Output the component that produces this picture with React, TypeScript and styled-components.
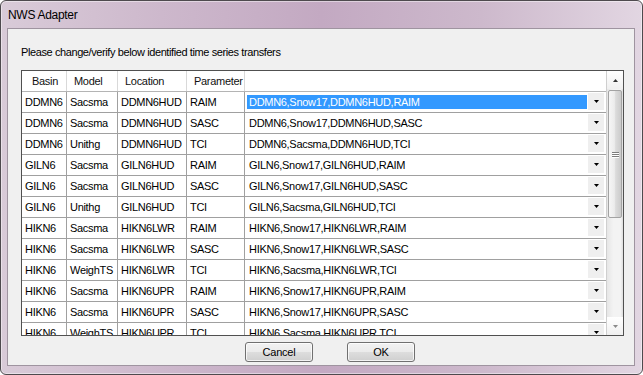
import React from "react";
import styled, { createGlobalStyle } from "styled-components";

const Global = createGlobalStyle`
  html, body { margin: 0; padding: 0; background: #ffffff; }
  body { font-family: "Liberation Sans", Arial, sans-serif; }
  * { box-sizing: border-box; }
`;

const Window = styled.div`
  width: 643px;
  height: 375px;
  border: 1px solid #4e4a4e;
  border-radius: 6px;
  background: linear-gradient(90deg, #d9cbd8 0%, #cdb8cc 25%, #c3a9c2 50%, #cdb9cc 75%, #e2d6e2 100%);
  box-shadow: inset 0 0 0 1px rgba(255, 255, 255, 0.45);
  display: flex;
  flex-direction: column;
  padding: 0 7px 8px 6px;
  overflow: hidden;
`;

const TitleBar = styled.div`
  height: 27px;
  display: flex;
  align-items: center;
  padding-left: 1px;
  font-size: 12px;
  letter-spacing: -0.3px;
  color: #000;
`;

const Content = styled.div`
  flex: 1;
  border: 1px solid #9f94a0;
  background: #f0f0f0;
  display: flex;
  flex-direction: column;
  padding: 16px 10px 0 13px;
`;

const Label = styled.div`
  font-size: 11px;
  line-height: 14px;
  letter-spacing: -0.4px;
  color: #000;
  white-space: nowrap;
`;

const GridBox = styled.div`
  margin-top: 11px;
  height: 266px;
  border: 1px solid #505050;
  background: #ffffff;
  display: flex;
  overflow: hidden;
`;

const Data = styled.div`
  flex: 1;
  display: flex;
  flex-direction: column;
  overflow: hidden;
`;

const cols = "45px 51px 69px 58px 1fr";

const HeaderRow = styled.div`
  display: grid;
  grid-template-columns: ${cols};
  height: 21px;
  flex-shrink: 0;
  border-bottom: 1px solid #b4b4b4;
  background: #ffffff;
`;

const HeaderCell = styled.div<{ $last?: boolean; $pad?: number }>`
  border-right: ${(p) => (p.$last ? "none" : "1px solid #d9d9d9")};
  padding-left: ${(p) => p.$pad ?? 7}px;
  font-size: 11px;
  line-height: 20px;
  letter-spacing: -0.3px;
  color: #111;
  white-space: nowrap;
  overflow: hidden;
`;

const Row = styled.div`
  display: grid;
  grid-template-columns: ${cols};
  height: 21px;
  flex-shrink: 0;
`;

const Cell = styled.div`
  border-right: 1px solid #a0a0a0;
  border-bottom: 1px solid #a0a0a0;
  padding-left: 3px;
  font-size: 11px;
  line-height: 20px;
  letter-spacing: -0.3px;
  color: #000;
  white-space: nowrap;
  overflow: hidden;
`;

const ComboCell = styled.div`
  border-bottom: 1px solid #a0a0a0;
  display: flex;
  padding: 1px 2px 0 2px;
  overflow: hidden;
`;

const ComboValue = styled.div<{ $selected?: boolean }>`
  flex: 1;
  height: 14px;
  margin: 2px 1px 0 0;
  padding-left: 2px;
  font-size: 11px;
  line-height: 14px;
  letter-spacing: -0.3px;
  white-space: nowrap;
  overflow: hidden;
  background: ${(p) => (p.$selected ? "#3399ff" : "transparent")};
  color: ${(p) => (p.$selected ? "#ffffff" : "#000000")};
`;

const ComboButton = styled.div`
  width: 16px;
  height: 17px;
  background: #efefef;
  display: flex;
  align-items: center;
  justify-content: center;
`;

const ScrollBar = styled.div`
  width: 17px;
  border-left: 1px solid #cfcfcf;
  display: flex;
  flex-direction: column;
  background: linear-gradient(90deg, #e6e6e6 0%, #f3f3f3 40%, #f3f3f3 85%, #dedede 100%);
`;

const ScrollArrow = styled.div`
  height: 18px;
  display: flex;
  align-items: center;
  justify-content: center;
  background: linear-gradient(180deg, #ffffff 0%, #f0f0f0 100%);
`;

const Thumb = styled.div`
  height: 128px;
  margin: 1px 1px 0 1px;
  border: 1px solid #a3a3a3;
  border-radius: 2px;
  background: linear-gradient(90deg, #f6f6f6 0%, #ececec 45%, #dcdcdc 55%, #cbcbcb 100%);
  display: flex;
  align-items: center;
  justify-content: center;
`;

const Gripper = styled.div`
  display: flex;
  flex-direction: column;
  gap: 1px;
`;

const GripLine = styled.div`
  width: 7px;
  height: 1px;
  background: #7d7d7d;
  box-shadow: 0 1px 0 #ffffff;
`;

const Track = styled.div`
  flex: 1;
`;

const ButtonRow = styled.div`
  display: flex;
  gap: 34px;
  margin-top: 6px;
  padding-left: 224px;
`;

const Button = styled.button`
  width: 68px;
  height: 20px;
  border: 1px solid #707070;
  border-radius: 3px;
  background: linear-gradient(180deg, #f2f2f2 0%, #ebebeb 48%, #dddddd 52%, #cfcfcf 100%);
  box-shadow: inset 0 0 0 1px rgba(255, 255, 255, 0.75);
  font-family: "Liberation Sans", Arial, sans-serif;
  font-size: 11px;
  letter-spacing: -0.2px;
  color: #000;
  padding: 0;
`;

const DownTri = ({ color = "#000" }: { color?: string }) => (
  <svg width="5" height="3" viewBox="0 0 5 3">
    <polygon points="0,0 5,0 2.5,3" fill={color} />
  </svg>
);

const UpTri = ({ color = "#333" }: { color?: string }) => (
  <svg width="5" height="3" viewBox="0 0 5 3">
    <polygon points="0,3 5,3 2.5,0" fill={color} />
  </svg>
);

const rows: [string, string, string, string, string][] = [
  ["DDMN6", "Sacsma", "DDMN6HUD", "RAIM", "DDMN6,Snow17,DDMN6HUD,RAIM"],
  ["DDMN6", "Sacsma", "DDMN6HUD", "SASC", "DDMN6,Snow17,DDMN6HUD,SASC"],
  ["DDMN6", "Unithg", "DDMN6HUD", "TCI", "DDMN6,Sacsma,DDMN6HUD,TCI"],
  ["GILN6", "Sacsma", "GILN6HUD", "RAIM", "GILN6,Snow17,GILN6HUD,RAIM"],
  ["GILN6", "Sacsma", "GILN6HUD", "SASC", "GILN6,Snow17,GILN6HUD,SASC"],
  ["GILN6", "Unithg", "GILN6HUD", "TCI", "GILN6,Sacsma,GILN6HUD,TCI"],
  ["HIKN6", "Sacsma", "HIKN6LWR", "RAIM", "HIKN6,Snow17,HIKN6LWR,RAIM"],
  ["HIKN6", "Sacsma", "HIKN6LWR", "SASC", "HIKN6,Snow17,HIKN6LWR,SASC"],
  ["HIKN6", "WeighTS", "HIKN6LWR", "TCI", "HIKN6,Sacsma,HIKN6LWR,TCI"],
  ["HIKN6", "Sacsma", "HIKN6UPR", "RAIM", "HIKN6,Snow17,HIKN6UPR,RAIM"],
  ["HIKN6", "Sacsma", "HIKN6UPR", "SASC", "HIKN6,Snow17,HIKN6UPR,SASC"],
  ["HIKN6", "WeighTS", "HIKN6UPR", "TCI", "HIKN6,Sacsma,HIKN6UPR,TCI"],
];

export default function App() {
  return (
    <>
      <Global />
      <Window>
        <TitleBar>NWS Adapter</TitleBar>
        <Content>
          <Label>Please change/verify below identified time series transfers</Label>
          <GridBox>
            <Data>
              <HeaderRow>
                <HeaderCell $pad={10}>Basin</HeaderCell>
                <HeaderCell>Model</HeaderCell>
                <HeaderCell>Location</HeaderCell>
                <HeaderCell>Parameter</HeaderCell>
                <HeaderCell $last />
              </HeaderRow>
              {rows.map((r, i) => (
                <Row key={i}>
                  <Cell>{r[0]}</Cell>
                  <Cell>{r[1]}</Cell>
                  <Cell>{r[2]}</Cell>
                  <Cell>{r[3]}</Cell>
                  <ComboCell>
                    <ComboValue $selected={i === 0}>{r[4]}</ComboValue>
                    <ComboButton>
                      <DownTri />
                    </ComboButton>
                  </ComboCell>
                </Row>
              ))}
            </Data>
            <ScrollBar>
              <ScrollArrow>
                <UpTri />
              </ScrollArrow>
              <Thumb>
                <Gripper>
                  <GripLine />
                  <GripLine />
                  <GripLine />
                </Gripper>
              </Thumb>
              <Track />
              <ScrollArrow>
                <DownTri color="#8a8a8a" />
              </ScrollArrow>
            </ScrollBar>
          </GridBox>
          <ButtonRow>
            <Button>Cancel</Button>
            <Button>OK</Button>
          </ButtonRow>
        </Content>
      </Window>
    </>
  );
}
